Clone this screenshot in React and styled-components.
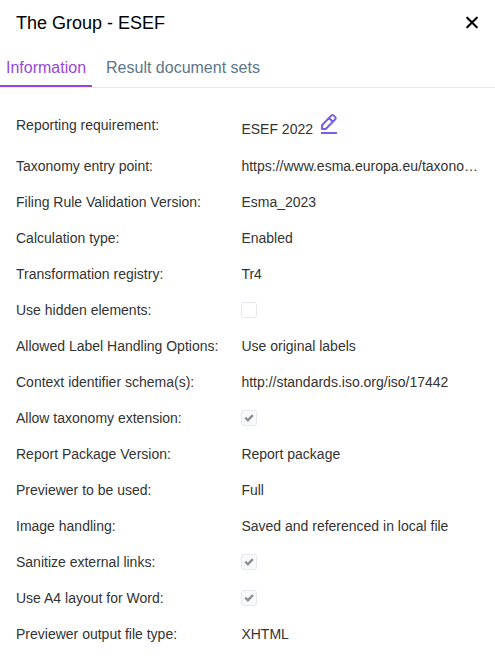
import React from 'react';
import styled, { createGlobalStyle } from 'styled-components';

const rows = [
  { label: 'Taxonomy entry point:', value: 'https://www.esma.europa.eu/taxonomy/2022-03-24/esef_cor.xsd' },
  { label: 'Filing Rule Validation Version:', value: 'Esma_2023' },
  { label: 'Calculation type:', value: 'Enabled' },
  { label: 'Transformation registry:', value: 'Tr4' },
  { label: 'Use hidden elements:', checked: false },
  { label: 'Allowed Label Handling Options:', value: 'Use original labels' },
  { label: 'Context identifier schema(s):', value: 'http://standards.iso.org/iso/17442' },
  { label: 'Allow taxonomy extension:', checked: true },
  { label: 'Report Package Version:', value: 'Report package' },
  { label: 'Previewer to be used:', value: 'Full' },
  { label: 'Image handling:', value: 'Saved and referenced in local file' },
  { label: 'Sanitize external links:', checked: true },
  { label: 'Use A4 layout for Word:', checked: true },
  { label: 'Previewer output file type:', value: 'XHTML' },
];

const App = () => {
  return (
    <Panel>
      <GlobalStyle />
      <Header>
        <Title>The Group - ESEF</Title>
        <CloseButton aria-label="Close">
          <svg width="14" height="14" viewBox="0 0 14 14" fill="none" stroke="#000" strokeWidth="2.1" strokeLinecap="round">
            <path d="M2.2 1.7 11.8 11.3M11.8 1.7 2.2 11.3" />
          </svg>
        </CloseButton>
      </Header>
      <Tabs>
        <Tab $active>Information</Tab>
        <Tab>Result document sets</Tab>
      </Tabs>
      <List>
        <FirstRow>
          <Label>Reporting requirement:</Label>
          <EditableValue>
            <span>ESEF 2022</span>
            <EditButton aria-label="Edit">
              <svg width="18" height="22" viewBox="0 0 18 22" fill="none" stroke="#7a5fe6" strokeWidth="2" strokeLinejoin="round" strokeLinecap="round">
                <path d="M2 16V12.2L11.4 2.4Q12.4 1.4 13.4 2.4L15.3 4.3Q16.3 5.3 15.3 6.3L5.7 16ZM9.2 5.1 12.8 8.7" />
                <path d="M1 20H17" strokeLinecap="butt" />
              </svg>
            </EditButton>
          </EditableValue>
        </FirstRow>
        {rows.map(({ label, value, checked }) => (
          <Row key={label}>
            <Label>{label}</Label>
            {value ? (
              <Value>{value}</Value>
            ) : (
              <Checkbox role="checkbox" aria-checked={checked} $checked={checked}>
                {checked && (
                  <svg width="10" height="8" viewBox="0 0 10 8" fill="none" stroke="#929292" strokeWidth="2.4">
                    <path d="M1.2 3.6 3.9 6.2 8.9 1.2" />
                  </svg>
                )}
              </Checkbox>
            )}
          </Row>
        ))}
      </List>
    </Panel>
  );
};

export default App;

const GlobalStyle = createGlobalStyle`
  body {
    margin: 0;
    background: #fff;
    font-family: "Liberation Sans", Arial, sans-serif;
  }
  * {
    box-sizing: border-box;
  }
`
const Panel = styled.div`
  width: 100%;
  height: 663px;
  overflow: hidden;
`
const Header = styled.header`
  display: flex;
  align-items: center;
  justify-content: space-between;
  height: 46px;
  padding: 0 16px;
`
const Title = styled.h1`
  margin: 0;
  font-size: 18px;
  font-weight: 400;
  line-height: 22px;
  color: #000;
`
const CloseButton = styled.button`
  display: flex;
  padding: 0;
  border: none;
  background: none;
  cursor: pointer;
`
const Tabs = styled.nav`
  display: flex;
  gap: 8px;
  height: 42px;
  border-bottom: 1px solid #e8e8e8;
`
const Tab = styled.button`
  height: 41px;
  padding: 4px 6px 0;
  border: none;
  border-bottom: 2px solid ${(props) => (props.$active ? '#9747d9' : 'transparent')};
  background: none;
  font-family: inherit;
  font-size: 16px;
  color: ${(props) => (props.$active ? '#9747d9' : '#5d7689')};
  cursor: pointer;
`
const List = styled.div`
  padding: 14px 16px 0;
`
const Row = styled.div`
  display: grid;
  grid-template-columns: 225.4px minmax(0, 1fr);
  align-items: center;
  height: 36px;
  font-size: 14px;
  line-height: 20px;
  color: #333;
`
const FirstRow = styled(Row)`
  height: 46px;
`
const Label = styled.span`
  white-space: nowrap;
`
const Value = styled.span`
  overflow: hidden;
  text-overflow: ellipsis;
  white-space: nowrap;
`
const EditableValue = styled.div`
  display: flex;
  align-items: flex-end;
  gap: 7px;
`
const EditButton = styled.button`
  display: flex;
  padding: 0 0 4px;
  margin-top: 1px;
  border: none;
  background: none;
  cursor: pointer;
`
const Checkbox = styled.span`
  display: flex;
  align-items: center;
  justify-content: center;
  width: 16px;
  height: 16px;
  border: 1px solid #e6e6ee;
  border-radius: 3px;
  background: ${(props) => (props.$checked ? '#f8f9fa' : '#fff')};
`
